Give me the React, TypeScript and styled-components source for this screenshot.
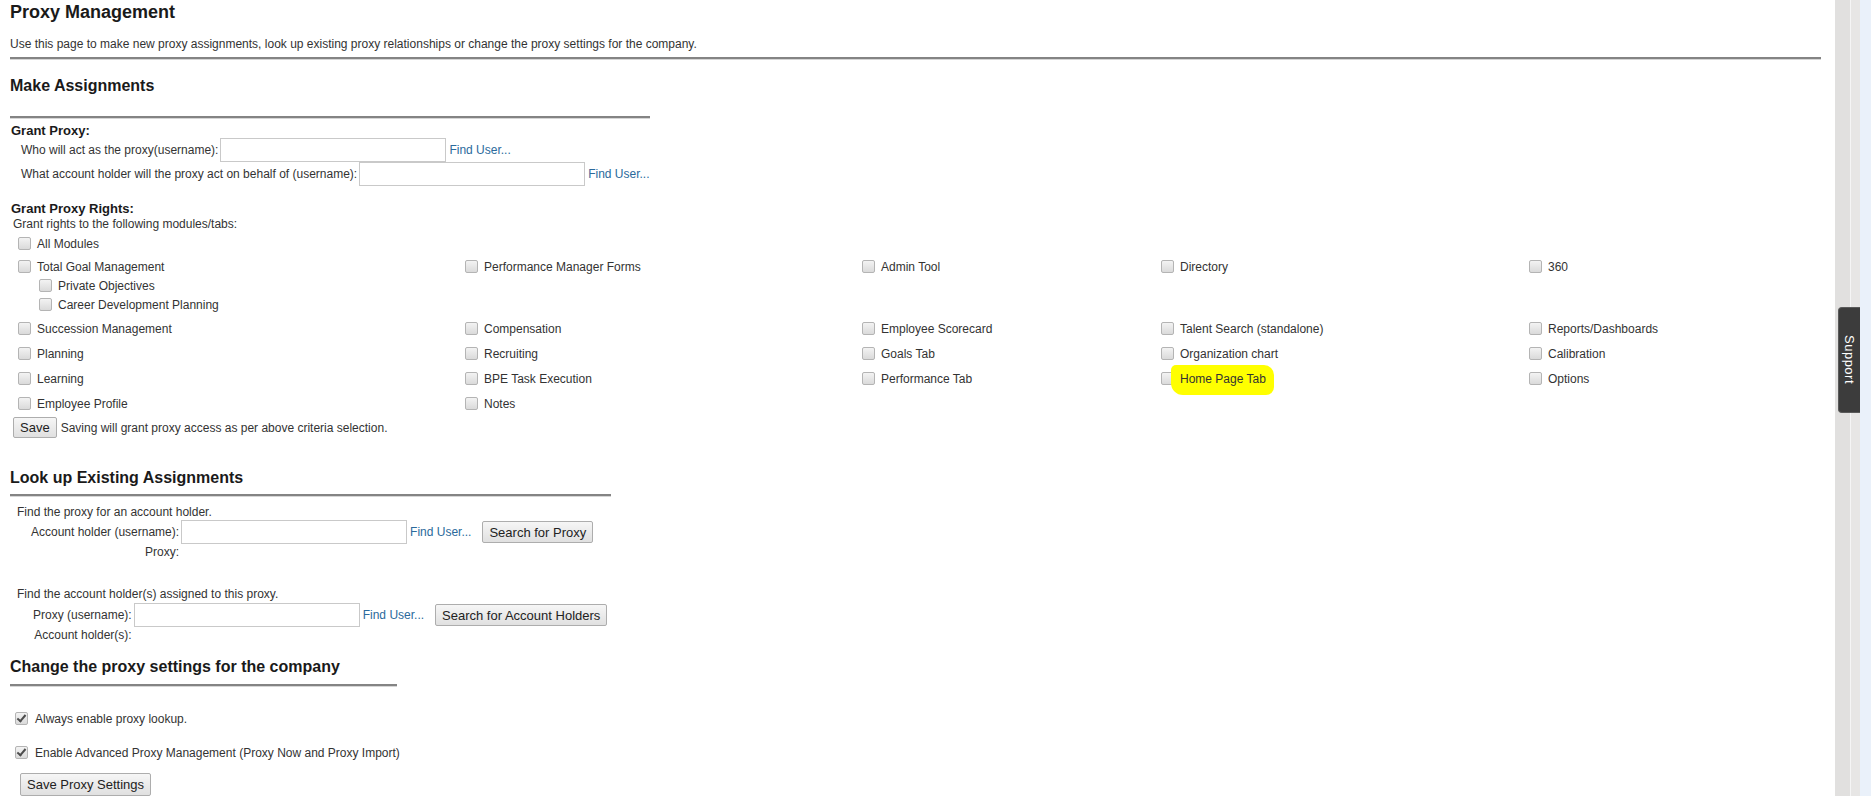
import React from "react";
import styled, {createGlobalStyle} from "styled-components";

const GlobalStyle = createGlobalStyle`
  html, body {
    margin: 0;
    padding: 0;
    background: #fff;
  }
  body {
    font-family: "Liberation Sans", Arial, sans-serif;
    font-size: 12px;
    color: #333;
  }
`

const Page = styled.div`
  display: flex;
  width: 1871px;
  height: 796px;
  overflow: hidden;
`

const Main = styled.main`
  flex: 1;
  padding: 0 14px 0 10px;
`

const Title = styled.h1`
  margin: 0;
  padding-top: 1px;
  font-size: 18px;
  line-height: 22px;
  font-weight: bold;
  color: #1a1a1a;
`

const Intro = styled.p`
  margin: 13px 0 0;
  line-height: 16px;
`

const Rule = styled.div<{$width?: number; $top?: number}>`
  width: ${p => (p.$width ? `${p.$width}px` : "100%")};
  margin-top: ${p => p.$top ?? 0}px;
  height: 2px;
  background: #848484;
  border-bottom: 1px solid #d6d6d6;
`

const SectionHeading = styled.h2<{$top: number}>`
  margin: ${p => p.$top}px 0 0;
  font-size: 16px;
  line-height: 20px;
  font-weight: bold;
  color: #1a1a1a;
`

const SubHeading = styled.h3<{$top: number}>`
  margin: ${p => p.$top}px 0 0 1px;
  font-size: 13px;
  line-height: 15px;
  font-weight: bold;
  color: #1a1a1a;
`

const Note = styled.div<{$top?: number; $indent?: number}>`
  margin-top: ${p => p.$top ?? 0}px;
  padding-left: ${p => p.$indent ?? 0}px;
  line-height: 16px;
`

const FieldRow = styled.div`
  display: flex;
  align-items: center;
  height: 24px;
  padding-left: 11px;
`

const Label = styled.span`
  margin-right: 2px;
`

const TextBox = styled.input.attrs({type: "text"})`
  box-sizing: border-box;
  width: 226px;
  height: 24px;
  margin: 0;
  border: 1px solid #c9c9c9;
  background: #fff;
  font: inherit;
`

const FindLink = styled.a`
  margin-left: 3px;
  color: #2b6a9c;
  text-decoration: none;
  cursor: pointer;
`

const Button = styled.button<{$pad?: number}>`
  box-sizing: border-box;
  height: 22px;
  margin: 0;
  padding: 0 ${p => p.$pad ?? 6}px;
  border: 1px solid #adadad;
  border-radius: 2px;
  background: linear-gradient(#f6f6f6, #e0e0e0);
  font-family: "Liberation Sans", Arial, sans-serif;
  font-size: 13px;
  color: #222;
  cursor: pointer;
`

const Check = styled.input.attrs({type: "checkbox"})`
  appearance: none;
  box-sizing: border-box;
  flex: none;
  position: relative;
  width: 13px;
  height: 13px;
  margin: 1px 6px 0 0;
  border: 1px solid #b4b4b4;
  border-radius: 2px;
  background: linear-gradient(#f3f3f3, #dadada);

  &:checked::after {
    content: "";
    position: absolute;
    left: 3px;
    top: 0px;
    width: 3px;
    height: 7px;
    border: solid #4d4d4d;
    border-width: 0 2px 2px 0;
    transform: rotate(40deg);
  }
`

const Option = styled.label<{$indent?: number}>`
  display: flex;
  align-items: flex-start;
  line-height: 16px;
  padding-left: ${p => p.$indent ?? 0}px;
  cursor: pointer;
`

const AllModules = styled.div`
  padding: 4px 0 3px 8px;
`

const ModuleGrid = styled.div`
  display: grid;
  grid-template-columns: 447px 397px 299px 368px 1fr;
  padding-left: 8px;
`

const ModuleCell = styled.div`
  padding: 4px 0 5px;
`

const SubList = styled.div`
  margin-bottom: -1px;
`

const SubItem = styled.div`
  padding-top: 3px;
`

// hand-drawn highlighter stroke laid over the label
const Marker = styled.span`
  position: relative;
  z-index: 0;

  &::before {
    content: "";
    position: absolute;
    z-index: -1;
    inset: -6px -8px -8px -9px;
    background: #ffff00;
    border-radius: 5px 10px 8px 12px;
  }
`

const SaveRow = styled.div`
  display: flex;
  align-items: center;
  gap: 4px;
  height: 21px;
  padding-left: 3px;

  ${Button} {
    height: 21px;
  }
`

const LookupGrid = styled.div<{$top?: number; $indent: number}>`
  display: grid;
  grid-template-columns: auto auto auto auto;
  justify-content: start;
  align-items: center;
  margin-top: ${p => p.$top ?? 0}px;
  padding-left: ${p => p.$indent}px;
`

const GridLabel = styled.span`
  justify-self: end;
  margin-right: 2px;
  line-height: 16px;
`

const GridButton = styled(Button)`
  margin-left: 11px;
`

const Settings = styled.div`
  margin-top: 24px;
  padding-left: 5px;
`

const SettingRow = styled.div<{$top?: number}>`
  margin-top: ${p => p.$top ?? 0}px;

  ${Check} {
    margin-right: 7px;
  }
`

const SettingsButton = styled(Button)`
  margin: 12px 0 0 10px;
  height: 23px;
`

const Rail = styled.aside`
  position: relative;
  flex: none;
  width: 36px;
  background: linear-gradient(
    to right,
    #e1e0df 0 15px,
    #f5f5f5 15px 16px,
    #e7e6e5 16px 25px,
    #eaf1fa 25px 36px
  );
`

const SupportTab = styled.div`
  position: absolute;
  top: 307px;
  left: 3px;
  width: 22px;
  height: 106px;
  display: flex;
  align-items: center;
  justify-content: center;
  box-sizing: border-box;
  border: 1px solid #5a5a5a;
  border-right: none;
  border-radius: 4px 0 0 4px;
  background: #3c3c3c;
  color: #fff;
  font-family: "Liberation Sans", Arial, sans-serif;
  font-size: 13px;
  letter-spacing: 0.5px;
  writing-mode: vertical-rl;
`

type Module = { label: string; children?: string[]; marked?: boolean }

const rows: Module[][] = [
  [
    {label: "Total Goal Management", children: ["Private Objectives", "Career Development Planning"]},
    {label: "Performance Manager Forms"},
    {label: "Admin Tool"},
    {label: "Directory"},
    {label: "360"},
  ],
  [
    {label: "Succession Management"},
    {label: "Compensation"},
    {label: "Employee Scorecard"},
    {label: "Talent Search (standalone)"},
    {label: "Reports/Dashboards"},
  ],
  [
    {label: "Planning"},
    {label: "Recruiting"},
    {label: "Goals Tab"},
    {label: "Organization chart"},
    {label: "Calibration"},
  ],
  [
    {label: "Learning"},
    {label: "BPE Task Execution"},
    {label: "Performance Tab"},
    {label: "Home Page Tab", marked: true},
    {label: "Options"},
  ],
  [
    {label: "Employee Profile"},
    {label: "Notes"},
  ],
]

function ModuleOption({module}: { module: Module }) {
  return (
    <ModuleCell>
      <Option>
        <Check />
        {module.marked ? <Marker>{module.label}</Marker> : <span>{module.label}</span>}
      </Option>
      {module.children && (
        <SubList>
          {module.children.map(child => (
            <SubItem key={child}>
              <Option $indent={21}>
                <Check />
                {child}
              </Option>
            </SubItem>
          ))}
        </SubList>
      )}
    </ModuleCell>
  )
}

export default function App() {
  return (
    <>
      <GlobalStyle />
      <Page>
        <Main>
          <Title>Proxy Management</Title>
          <Intro>
            Use this page to make new proxy assignments, look up existing proxy relationships or change the proxy settings for the company.
          </Intro>
          <Rule $top={5} />

          <SectionHeading $top={16}>Make Assignments</SectionHeading>
          <Rule $top={20} $width={640} />

          <SubHeading $top={4}>Grant Proxy:</SubHeading>
          <FieldRow>
            <Label>Who will act as the proxy(username):</Label>
            <TextBox />
            <FindLink>Find User...</FindLink>
          </FieldRow>
          <FieldRow>
            <Label>What account holder will the proxy act on behalf of (username):</Label>
            <TextBox />
            <FindLink>Find User...</FindLink>
          </FieldRow>

          <SubHeading $top={15}>Grant Proxy Rights:</SubHeading>
          <Note $indent={3}>Grant rights to the following modules/tabs:</Note>
          <AllModules>
            <Option>
              <Check />
              All Modules
            </Option>
          </AllModules>
          <ModuleGrid>
            {rows.map((row, r) =>
              row.map((module, c) => (
                <ModuleOption key={`${r}-${c}`} module={module} />
              ))
            )}
          </ModuleGrid>
          <SaveRow>
            <Button>Save</Button>
            <span>Saving will grant proxy access as per above criteria selection.</span>
          </SaveRow>

          <SectionHeading $top={30}>Look up Existing Assignments</SectionHeading>
          <Rule $top={6} $width={601} />
          <Note $top={7} $indent={7}>Find the proxy for an account holder.</Note>
          <LookupGrid $indent={21}>
            <GridLabel>Account holder (username):</GridLabel>
            <TextBox />
            <FindLink>Find User...</FindLink>
            <GridButton>Search for Proxy</GridButton>
            <GridLabel>Proxy:</GridLabel>
          </LookupGrid>

          <Note $top={26} $indent={7}>Find the account holder(s) assigned to this proxy.</Note>
          <LookupGrid $top={1} $indent={23}>
            <GridLabel>Proxy (username):</GridLabel>
            <TextBox />
            <FindLink>Find User...</FindLink>
            <GridButton>Search for Account Holders</GridButton>
            <GridLabel>Account holder(s):</GridLabel>
          </LookupGrid>

          <SectionHeading $top={14}>Change the proxy settings for the company</SectionHeading>
          <Rule $top={7} $width={387} />
          <Settings>
            <SettingRow>
              <Option>
                <Check defaultChecked />
                Always enable proxy lookup.
              </Option>
            </SettingRow>
            <SettingRow $top={18}>
              <Option>
                <Check defaultChecked />
                Enable Advanced Proxy Management (Proxy Now and Proxy Import)
              </Option>
            </SettingRow>
          </Settings>
          <SettingsButton $pad={6}>Save Proxy Settings</SettingsButton>
        </Main>
        <Rail>
          <SupportTab>Support</SupportTab>
        </Rail>
      </Page>
    </>
  )
}
